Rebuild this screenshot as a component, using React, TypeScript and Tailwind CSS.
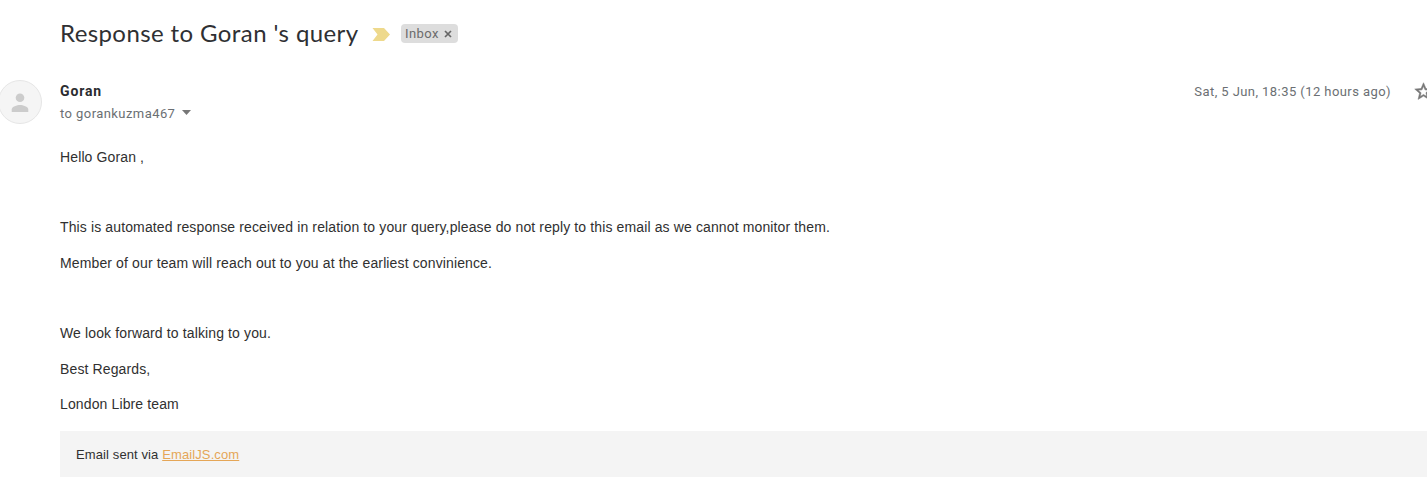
import React from "react";

const paragraph = "whitespace-nowrap text-[14px] leading-[20px] tracking-[.126px]";

export default function App() {
  return (
    <main className="h-[482px] w-full overflow-hidden bg-white font-['Liberation_Sans',Arial,sans-serif] text-[#303030]">
      <header className="flex h-[68px] items-center pl-[60px]">
        <h1 className="mb-[2px] w-[312px] whitespace-nowrap font-['Lato',sans-serif] text-[24px] leading-[28px] tracking-[.4px] text-[#2f3033]">Response to Goran 's query</h1>
        <svg className="h-[13px] w-[18px]" viewBox="0 0 18 13" fill="#eed98c"><path d="M.5 0H12l6 6.500L12 13H.5l5-6.500z" /></svg>
        <div className="mb-px ml-[11px] flex h-[19px] w-[57px] items-center gap-[5px] rounded-[4px] bg-[#ddd] pl-[4px] font-['Roboto',sans-serif] text-[13px] tracking-[.45px] text-[#6b6b6b]">
          <span>Inbox</span>
          <svg className="size-[8px]" viewBox="0 0 8 8" stroke="#666" strokeWidth="1.700"><path d="M1 1l6 6M7 1L1 7" /></svg>
        </div>
      </header>
      <section className="flex h-[79px] pt-[12px] font-['Roboto',sans-serif]">
        <div className="-ml-[2px] flex size-[44px] shrink-0 items-center justify-center rounded-full border border-[#e6e6e6] bg-[#f5f5f5]">
          <svg className="size-[42px]" viewBox="0 0 42 42" fill="#ccc"><circle cx="21" cy="16.700" r="4.300" /><path d="M12.700 31v-2.500c0-3 5.300-4.500 8.300-4.500s8.300 1.500 8.300 4.500V31z" /></svg>
        </div>
        <div className="ml-[18px] flex-1">
          <div className="text-[14px] font-bold leading-[22px] tracking-[.85px] text-[#2b2c2f]">Goran</div>
          <div className="flex items-center pt-px text-[13px] leading-[22px] tracking-[.43px] text-[#6b6f73]">
            to gorankuzma467
            <svg className="mb-[3px] ml-[7px] h-[5px] w-[9px]" viewBox="0 0 9 5" fill="#777"><path d="M0 0h9L4.500 5z" /></svg>
          </div>
        </div>
        <div className="mr-[23px] whitespace-nowrap pt-px text-[13px] leading-[22px] tracking-[.43px] text-[#6b6f73]">Sat, 5 Jun, 18:35 (12 hours ago)</div>
        <div className="w-[13px] shrink-0 overflow-hidden">
          <svg className="-ml-px mt-px size-[21px]" viewBox="0 0 24 24" fill="#777" stroke="#777" strokeWidth=".6"><path d="M22 9.240l-7.190-.62L12 2 9.190 8.630 2 9.240l5.460 4.730L5.820 21 12 17.270 18.180 21l-1.630-7.030L22 9.240zM12 15.400l-3.760 2.270 1-4.280-3.320-2.880 4.380-.38L12 6.100l1.710 4.040 4.380.38-3.320 2.880 1 4.280L12 15.400z" /></svg>
        </div>
      </section>
      <article className="flex h-[284px] flex-col pl-[60px]">
        <p className={paragraph}>Hello Goran ,</p>
        <p className={`${paragraph} mt-[50px]`}>This is automated response received in relation to your query,please do not reply to this email as we cannot monitor them.</p>
        <p className={`${paragraph} mt-[16px]`}>Member of our team will reach out to you at the earliest convinience.</p>
        <p className={`${paragraph} mt-[50px]`}>We look forward to talking to you.</p>
        <p className={`${paragraph} mt-[16px]`}>Best Regards,</p>
        <p className={`${paragraph} mt-[15px]`}>London Libre team</p>
      </article>
      <footer className="ml-[60px] h-[46px] bg-[#f4f4f4] px-[16px] pt-[14px] text-[13px] leading-[20px] tracking-[.11px]">
        Email sent via <a href="#" className="text-[#e5a657] underline">EmailJS.com</a>
      </footer>
    </main>
  );
}
